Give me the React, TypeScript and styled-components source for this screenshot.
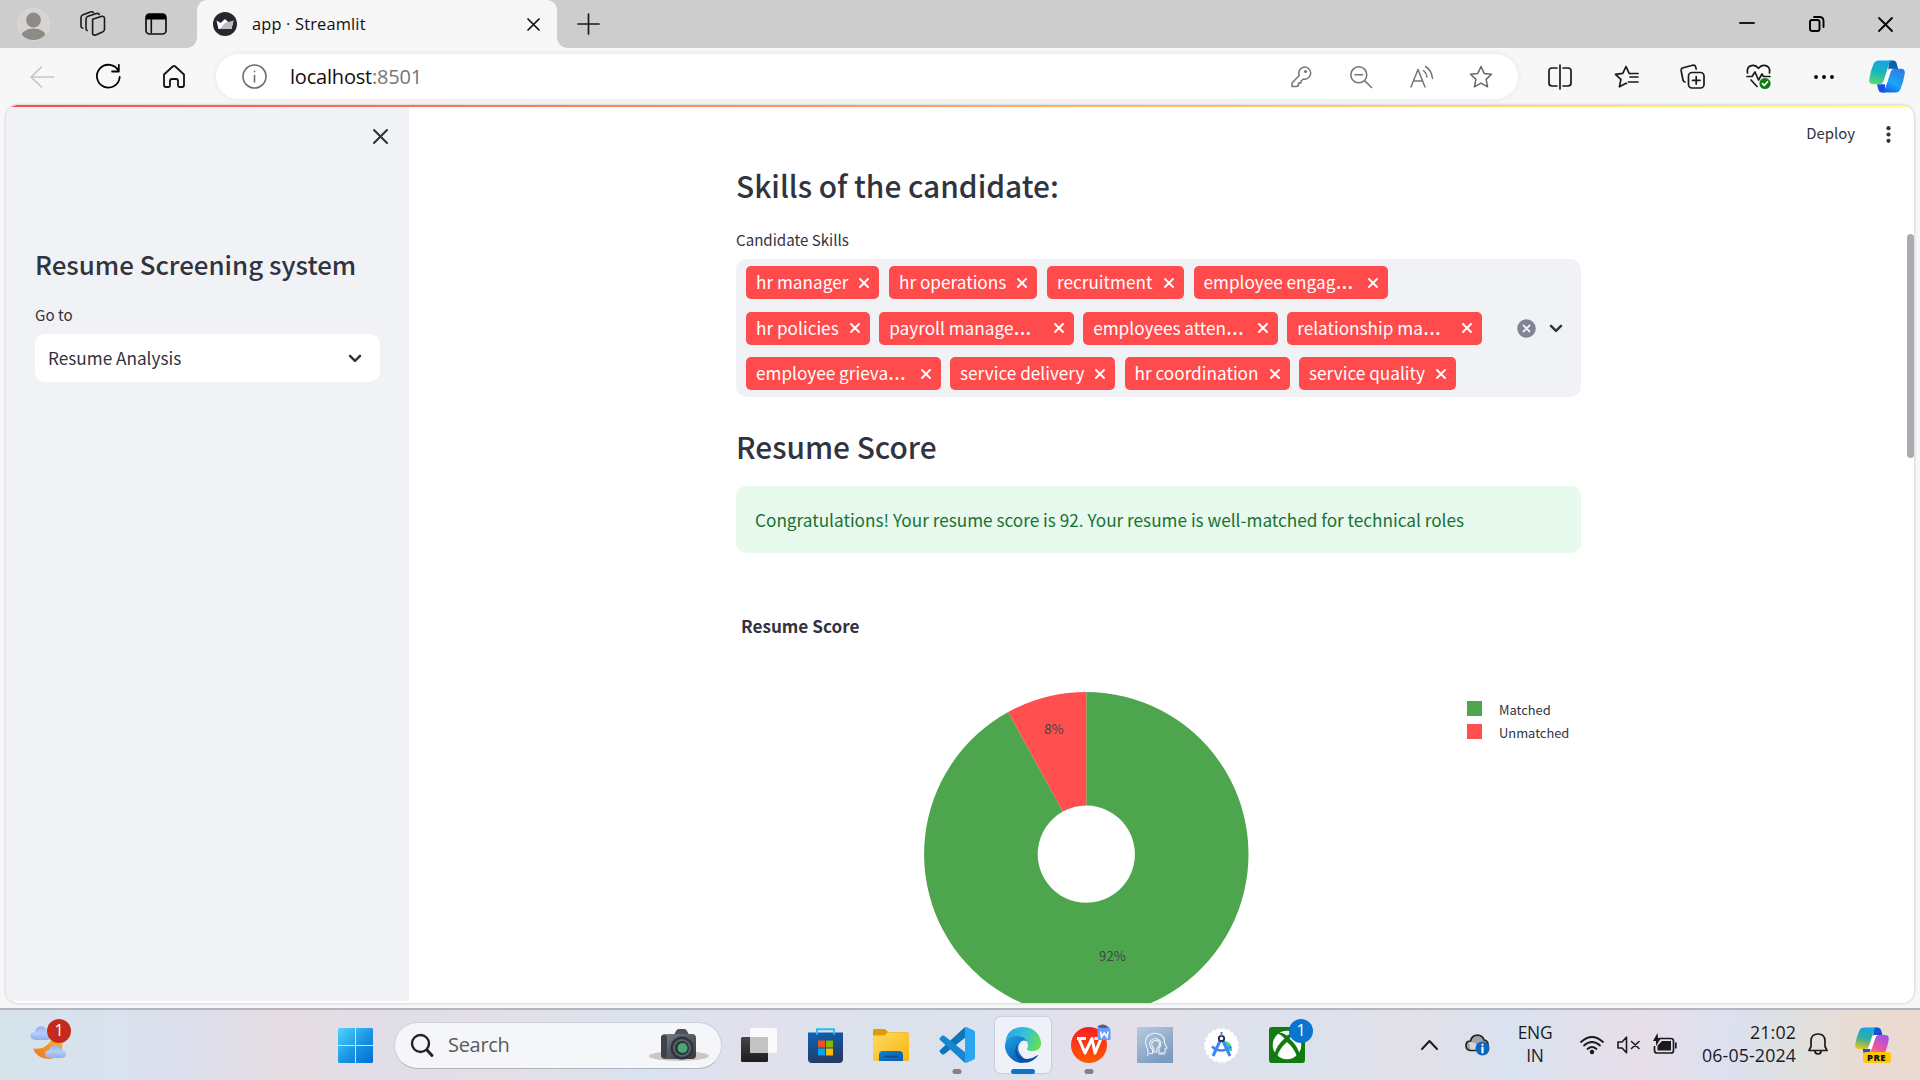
import React from 'react';
import styled, { createGlobalStyle } from 'styled-components';

const SOURCE = '"Noto Sans CJK SC", "Open Sans", sans-serif';
const SEGOE = '"Open Sans", "Noto Sans", sans-serif';

const Global = createGlobalStyle`
  *, *::before, *::after { box-sizing: border-box; }
  html, body { margin: 0; padding: 0; overflow: hidden; background: #f7f7f7; }
  svg { display: block; flex: none; overflow: visible; }
`;

const Screen = styled.div`
  width: 1920px;
  height: 1080px;
  display: flex;
  flex-direction: column;
  overflow: hidden;
  font-family: ${SEGOE};
  background: #f7f7f7;
`;

/* ---------- browser chrome ---------- */
const TabStrip = styled.div`
  height: 48px;
  flex: none;
  display: flex;
  background: #cdcdcd;
`;
const Slot = styled.div<{ $w: number }>`
  width: ${p => p.$w}px;
  flex: none;
  display: flex;
  align-items: center;
  justify-content: center;
`;
const StripLead = styled.div`
  width: 197px;
  flex: none;
  display: flex;
  padding-left: 1px;
`;
const Tab = styled.div`
  position: relative;
  width: 360px;
  height: 48px;
  flex: none;
  display: flex;
  align-items: center;
  padding: 0 16px;
  background: #f7f7f7;
  border-radius: 10px 10px 0 0;
  &::before, &::after {
    content: '';
    position: absolute;
    bottom: 0;
    width: 10px;
    height: 10px;
  }
  &::before { left: -10px; background: radial-gradient(circle at 0 0, #cdcdcd 9.5px, #f7f7f7 10px); }
  &::after { right: -10px; background: radial-gradient(circle at 100% 0, #cdcdcd 9.5px, #f7f7f7 10px); }
`;
const TabTitle = styled.span`
  flex: 1;
  margin-left: 15px;
  font-size: 16.4px;
  letter-spacing: 0.17px;
  line-height: 24px;
  color: #111;
`;
const StripFill = styled.div`flex: 1;`;

const Toolbar = styled.div`
  height: 57px;
  flex: none;
  display: flex;
  align-items: center;
  padding: 0 2px 0 8px;
  background: #f7f7f7;
`;
const Address = styled.div`
  width: 1302px;
  height: 45px;
  flex: none;
  margin: 0 9px 0 9px;
  display: flex;
  align-items: center;
  padding: 0 7px 0 26px;
  border-radius: 23px;
  background: #fff;
  box-shadow: 0 0 6px rgba(0, 0, 0, 0.08);
`;
const Url = styled.div`
  flex: 1;
  margin-left: 23px;
  font-size: 20px;
  line-height: 28px;
  letter-spacing: -0.2px;
  color: #101010;
  span { color: #757575; }
`;

/* ---------- page ---------- */
const Page = styled.div`
  position: relative;
  height: 898px;
  flex: none;
  margin: 0 6px;
  display: flex;
  overflow: hidden;
  border-radius: 12px;
  background: #fff;
  box-shadow: 0 0 3px rgba(0, 0, 0, 0.25);
`;
const Decoration = styled.div`
  position: absolute;
  top: 0;
  left: 0;
  right: 0;
  height: 2px;
  background: linear-gradient(90deg, #ff4b4b, #fffd80);
`;
const Sidebar = styled.aside`
  width: 403px;
  height: 896px;
  flex: none;
  padding: 0 29px;
  background: #f0f2f6;
  display: flex;
  flex-direction: column;
  font-family: ${SOURCE};
  color: #31333f;
`;
const SideClose = styled.div`
  height: 62px;
  display: flex;
  justify-content: flex-end;
  align-items: center;
  margin-right: -8px;
`;
const SideTitle = styled.h1`
  margin: 79px 0 0;
  font-size: 25.9px;
  font-weight: 500;
  line-height: 36px;
  white-space: nowrap;
`;
const Label = styled.div<{ $top: number }>`
  flex: none;
  margin-top: ${p => p.$top}px;
  height: 26px;
  font-size: 15.1px;
  line-height: 26px;
`;
const Select = styled.div`
  height: 48px;
  margin-top: 7px;
  padding: 0 18px 0 13px;
  display: flex;
  align-items: center;
  justify-content: space-between;
  border-radius: 10px;
  background: #fff;
  font-size: 17.2px;
  line-height: 28px;
`;

const Main = styled.main`
  flex: 1;
  display: flex;
  justify-content: space-between;
  font-family: ${SOURCE};
  color: #31333f;
`;
const Column = styled.div`
  width: 845px;
  margin-left: 327px;
  padding-top: 56px;
  display: flex;
  flex-direction: column;
`;
const Heading = styled.h2<{ $top: number }>`
  flex: none;
  margin: ${p => p.$top}px 0 0;
  height: 48px;
  font-size: 29.85px;
  font-weight: 500;
  line-height: 48px;
  white-space: nowrap;
`;
const Multi = styled.div`
  flex: none;
  height: 138px;
  margin-top: 7px;
  padding: 7px 18px 0 10px;
  display: flex;
  justify-content: space-between;
  border-radius: 10px;
  background: #f0f2f6;
`;
const TagRows = styled.div`
  display: flex;
  flex-direction: column;
  gap: 12.5px;
`;
const TagRow = styled.div<{ $gap: number }>`
  display: flex;
  gap: ${p => p.$gap}px;
`;
const Tag = styled.div<{ $w: number }>`
  width: ${p => p.$w}px;
  height: 33px;
  padding: 0 10px;
  display: flex;
  align-items: center;
  justify-content: space-between;
  border-radius: 5px;
  background: #ff4b4b;
  color: #fff;
  font-size: 17.2px;
  white-space: nowrap;
`;
const TagText = styled.span`
  height: 33px;
  line-height: 31px;
`;
const Dots = styled.span`
  font-family: "Open Sans", sans-serif;
  font-size: 23px;
  line-height: 20px;
`;
const MultiTools = styled.div`
  height: 124px;
  display: flex;
  align-items: center;
  gap: 13px;
`;
const Alert = styled.div`
  flex: none;
  height: 67px;
  margin-top: 16px;
  padding: 0 19px;
  display: flex;
  align-items: center;
  border-radius: 10px;
  background: #e8f9ee;
  color: #177233;
  font-size: 17.19px;
  white-space: nowrap;
`;
const ChartTitle = styled.h3`
  flex: none;
  margin: 59px 0 0 5px;
  height: 28px;
  font-size: 17.15px;
  font-weight: 700;
  line-height: 28px;
`;
const ChartBody = styled.div`
  flex: none;
  display: flex;
  margin-top: 52px;
  padding-left: 188px;
`;
const Legend = styled.div`
  margin: 6px 0 0 218px;
  display: flex;
  flex-direction: column;
`;
const LegendRow = styled.div`
  height: 23.3px;
  display: flex;
  align-items: center;
  gap: 17px;
  font-size: 12.9px;
  line-height: 20px;
`;
const Swatch = styled.span<{ $c: string }>`
  width: 15px;
  height: 15px;
  margin-top: -2px;
  background: ${p => p.$c};
`;
const PageTools = styled.div`
  display: flex;
  padding-top: 8px;
  height: 50px;
  align-items: center;
  font-size: 14.9px;
  gap: 31px;
  margin-right: 23px;
`;
const Deploy = styled.span`
  height: 30px;
  line-height: 27px;
`;
const ScrollThumb = styled.div`
  position: absolute;
  right: 0;
  top: 129px;
  width: 7px;
  height: 224px;
  border-radius: 4px;
  background: #acabb1;
`;

/* ---------- taskbar ---------- */
const PageGap = styled.div`height: 5px; flex: none;`;
const Taskbar = styled.footer`
  height: 72px;
  flex: none;
  display: flex;
  align-items: center;
  border-top: 2px solid #b3b4bb;
  background: linear-gradient(90deg, #d5e3eb 0, #d9e2ee 120px, #dddeeb 200px, #e6dde3 285px, #e1dee8 400px, #e4dfe6 500px, #d9e3ef 640px, #e1e0ec 760px, #dbe2ec 880px, #dde2ee 1000px, #e4e0ea 1120px, #dbe2ed 1300px, #e2dfe8 1420px, #d9e2ef 1510px, #e7dee9 1640px, #dce0ef 1730px, #e0e0df 1800px, #e9dbd3 1860px, #ead9d0 1920px);
`;
const Weather = styled.div`
  position: relative;
  width: 322px;
  height: 70px;
  padding: 16px 0 0 29px;
  flex: none;
`;
const Badge = styled.span<{ $x: number; $y: number; $c: string }>`
  position: absolute;
  left: ${p => p.$x}px;
  top: ${p => p.$y}px;
  width: 24px;
  height: 24px;
  border-radius: 50%;
  background: ${p => p.$c};
  color: #fff;
  font-size: 16px;
  line-height: 23px;
  text-align: center;
`;
const SearchBox = styled.div`
  width: 328px;
  height: 47px;
  flex: none;
  margin: 0 4px 0 6px;
  padding: 0 12px 0 16px;
  display: flex;
  align-items: center;
  border: 1.5px solid #cfcfd8;
  border-bottom-color: #b3b5be;
  border-radius: 24px;
  background: #f5f6f9;
  font-size: 20px;
  color: #5a5a5c;
`;
const SearchText = styled.span`
  flex: 1;
  margin-left: 15px;
  letter-spacing: -0.3px;
  line-height: 28px;
`;
const AppButton = styled.div<{ $active?: boolean }>`
  position: relative;
  width: 56px;
  height: 56px;
  margin: 0 5px;
  flex: none;
  display: flex;
  align-items: center;
  justify-content: center;
  border-radius: 6px;
  background: ${p => (p.$active ? '#eef1f7' : 'transparent')};
  box-shadow: ${p => (p.$active ? '0 0 1px 1px rgba(150,155,175,0.28)' : 'none')};
`;
const Running = styled.span<{ $active?: boolean }>`
  position: absolute;
  bottom: -1px;
  left: 50%;
  width: ${p => (p.$active ? 24 : 9)}px;
  height: 5px;
  transform: translateX(-50%);
  border-radius: 3px;
  background: ${p => (p.$active ? '#0a74d1' : '#818388')};
`;
const TrayFill = styled.div`flex: 1;`;
const TrayText = styled.div<{ $align: string; $w: number; $size: number; $ls: number }>`
  width: ${p => p.$w}px;
  flex: none;
  margin-top: -2px;
  text-align: ${p => p.$align};
  font-size: ${p => p.$size}px;
  line-height: 23.5px;
  letter-spacing: ${p => p.$ls}px;
  color: #1b1b1f;
  white-space: nowrap;
`;

/* ---------- small icons ---------- */
type LineProps = { w: number; h: number; c?: string; s?: number; children: React.ReactNode };
const Line = ({ w, h, c = '#1a1a1a', s = 1.7, children }: LineProps) => (
  <svg width={w} height={h} viewBox={`0 0 ${w} ${h}`} fill="none" stroke={c} strokeWidth={s} strokeLinecap="round" strokeLinejoin="round">
    {children}
  </svg>
);
const Cross = ({ size, c, s }: { size: number; c: string; s: number }) => (
  <Line w={size} h={size} c={c} s={s}><path d={`M1 1L${size - 1} ${size - 1}M${size - 1} 1L1 ${size - 1}`} /></Line>
);
const Chevron = () => <Line w={14} h={9} c="#31333f" s={2.5}><path d="M2 1.8l5 5 5-5" /></Line>;

const Avatar = () => (
  <svg width="33" height="33" viewBox="0 0 33 33">
    <clipPath id="av"><circle cx="16.5" cy="16.5" r="15.6" /></clipPath>
    <circle cx="16.5" cy="16.5" r="16" fill="#d6d4d0" stroke="#dddbd7" />
    <g fill="#8e8a86" clipPath="url(#av)"><circle cx="16.5" cy="12" r="7.4" /><ellipse cx="16.5" cy="29" rx="12.5" ry="8.5" /></g>
  </svg>
);
const Workspaces = () => (
  <Line w={26} h={26} s={1.6}>
    <path d="M12.6 8.2l8.500-2.800q3.400-.8 3.400 2.200v10.600q0 2-2 2.800l-6.800 2.900q-3.100 1-3.100-2z" />
    <path d="M7.2 19.500q-1.200-.4-1.200-2V8q0-2 2-2.800L16.500 2.500q2.200-.6 2.800 1" />
    <path d="M2.800 17.200q-1.800-.4-1.800-2V6.500q0-2 2-2.800L10.500 1q2-.6 3 .6" />
  </Line>
);
const TabActions = () => (
  <svg width="22" height="22" viewBox="0 0 22 22"><rect x="1" y="1" width="20" height="20" rx="3.5" fill="none" stroke="#111" strokeWidth="1.7" /><path d="M1 6.500V4q0-3.200 3.200-3.200h13.600Q21 .8 21 4v2.500z" fill="#000" /><path d="M6.300 6v14.500" stroke="#111" strokeWidth="1.6" /></svg>
);
const Favicon = () => (
  <svg width="24" height="24" viewBox="0 0 24 24"><circle cx="12" cy="12" r="12" fill="#262730" /><path d="M3.500 8.500l4.200 2.500L12 7l4.300 4 4.200-2.500L18.500 17h-13z" fill="#fff" /><path d="M12 11l8.500-2.500L18.500 17H7z" fill="#bdbdc0" /></svg>
);
const CopilotMark = ({ w, h, pre }: { w: number; h: number; pre?: boolean }) => {
  const k = pre ? 'p' : 'e';
  return (
    <svg width={w} height={h} viewBox="0 0 36 33" preserveAspectRatio="none">
      <defs>
        <linearGradient id={`l${k}`} x1=".4" y1="0" x2=".2" y2="1"><stop offset="0" stopColor="#12a6e4" /><stop offset=".5" stopColor={pre ? '#35b19b' : '#1cb7b6'} /><stop offset="1" stopColor={pre ? '#f0c419' : '#5ade6c'} /></linearGradient>
        <linearGradient id={`r${k}`} x1=".8" y1="0" x2=".3" y2="1"><stop offset="0" stopColor={pre ? '#a14fe8' : '#2f7be4'} /><stop offset=".6" stopColor={pre ? '#e8569f' : '#1aa6f5'} /><stop offset="1" stopColor={pre ? '#ff8a55' : '#1467e8'} /></linearGradient>
      </defs>
      <path d="M20 .5h4q2.800 0 3.600 2.800L29.200 9h-5q-2.600 0-3.600 3l-2 6z" fill={pre ? '#1a4fd0' : '#0a5fa8'} />
      <path d="M16 32.500h-3.500q-2.300 0-3-2.500L8 24.200h4.500q2.600 0 3.500-3z" fill="#1a4fe0" />
      <path d="M9.500.5H23q-2 .5-3 3.500l-5.500 17q-1 3.200-4 3.200H4q-4.500 0-3.700-5.200Q1.500 11 4.500 4 6 .5 9.500.5z" fill={`url(#l${k})`} />
      <path d="M26.500 32.500H13q2-.5 3-3.500l5.500-17q1-3.200 4-3.200H32q4.500 0 3.700 5.200Q34.500 22 31.500 29q-1.500 3.500-5 3.500z" fill={`url(#r${k})`} />
      <path d="M20 8.800h5.500q-3 0-4 3.200l-4 12.200H12.500q2-.5 3-3.500l2.500-8q1-3 2-3.900z" fill="#fff" />
    </svg>
  );
};

const Pie = () => {
  const a = 0.08 * 2 * Math.PI;
  const R = 162.2, r = 48.6, cx = 162.3, cy = 162.2;
  const x = (q: number) => cx - Math.sin(a) * q;
  const y = (q: number) => cy - Math.cos(a) * q;
  return (
    <svg width="325" height="325" viewBox="0 0 325 325" fontFamily={SOURCE} fontSize="13.2" fill="#444">
      <path fill="#4da64d" d={`M${cx} ${cy - R}A${R} ${R} 0 1 1 ${x(R)} ${y(R)}L${x(r)} ${y(r)}A${r} ${r} 0 1 0 ${cx} ${cy - r}z`} />
      <path fill="#ff4f4f" d={`M${cx} ${cy - R}A${R} ${R} 0 0 0 ${x(R)} ${y(R)}L${x(r)} ${y(r)}A${r} ${r} 0 0 1 ${cx} ${cy - r}z`} />
      <text x="130" y="42" textAnchor="middle">8%</text>
      <text x="188.5" y="269" textAnchor="middle">92%</text>
    </svg>
  );
};

/* ---------- taskbar icons ---------- */
const WeatherIcon = () => (
  <svg width="38" height="36" viewBox="0 0 38 36">
    <defs>
      <linearGradient id="cl" x1="0" y1="0" x2="0" y2="1"><stop offset="0" stopColor="#8fb2ee" /><stop offset=".5" stopColor="#b5cdf8" /><stop offset="1" stopColor="#8db0ef" /></linearGradient>
      <linearGradient id="mo" x1="1" y1="0" x2="0" y2="1"><stop offset="0" stopColor="#f6b72b" /><stop offset="1" stopColor="#ec7424" /></linearGradient>
    </defs>
    <path d="M33 11.500Q36 32 20 33 8 33 4 22.500q8 1.500 14-3.500 5-4 6-9z" fill="url(#mo)" />
    <path d="M6 14q-5-1-4.800-4.500Q1.500 6 5.500 6 7 .5 12 .3 16.500.5 18 5q4 0 4 4.500T18 14z" fill="url(#cl)" />
    <path d="M20 32q-4-.5-4-4t4-4q1.500-5 6.500-5 4.500.5 5.500 5 5 .5 5 4t-4 4z" fill="url(#cl)" />
  </svg>
);
const StartIcon = () => (
  <svg width="35" height="35" viewBox="0 0 35 35">
    <defs><linearGradient id="st" gradientUnits="userSpaceOnUse" x1="0" y1="0" x2="35" y2="35"><stop offset="0" stopColor="#4fd5ff" /><stop offset=".55" stopColor="#1b93e2" /><stop offset="1" stopColor="#026fd0" /></linearGradient></defs>
    <path fill="url(#st)" d="M1.500 0H17v17H0V1.500Q0 0 1.500 0zM18 0h15.500Q35 0 35 1.500V17H18zM0 18h17v17H1.500Q0 35 0 33.500zM18 18h17v15.500q0 1.500-1.500 1.500H18z" />
  </svg>
);
const CameraIcon = () => (
  <svg width="60" height="34" viewBox="0 0 60 34">
    <defs><linearGradient id="ca" x1="0" y1="0" x2="1" y2="1"><stop offset="0" stopColor="#7b828b" /><stop offset=".5" stopColor="#545a63" /><stop offset="1" stopColor="#343941" /></linearGradient></defs>
    <ellipse cx="30" cy="28" rx="30" ry="5" fill="#cfc6c3" />
    <path d="M25 7q2-5 4-6h7q2 1 4 6z" fill="#4d535c" />
    <rect x="12" y="6" width="35" height="25" rx="4" fill="url(#ca)" /><rect x="12" y="7" width="6" height="23" rx="3" fill="#3d434b" />
    <circle cx="33" cy="20" r="11.5" fill="#30353b" /><circle cx="33" cy="20" r="9" fill="#5c636b" /><circle cx="33" cy="20" r="7" fill="#1f3a33" /><circle cx="33.5" cy="20" r="5" fill="#4fa578" />
  </svg>
);
const TaskView = () => (
  <svg width="36" height="36" viewBox="0 0 36 36">
    <defs><linearGradient id="tv" x1="0" y1="0" x2="0" y2="1"><stop offset="0" stopColor="#454545" /><stop offset="1" stopColor="#1d1d1d" /></linearGradient></defs>
    <rect x="0" y="10" width="27" height="25" rx="1.5" fill="url(#tv)" /><rect x="9" y="1" width="27" height="25" rx="1.5" fill="#fcfcfc" opacity=".92" /><path d="M9 10h18v16H9z" fill="#c3c3c4" />
  </svg>
);
const StoreIcon = () => (
  <svg width="35" height="35" viewBox="0 0 35 35">
    <defs><linearGradient id="ms" x1="0" y1="0" x2=".3" y2="1"><stop offset="0" stopColor="#0c63b5" /><stop offset="1" stopColor="#253b66" /></linearGradient></defs>
    <path d="M0 4.500h35V31q0 4-4 4H4q-4 0-4-4z" fill="url(#ms)" /><path d="M9 6.500V1.200h17v5.300" fill="none" stroke="#29bdf3" strokeWidth="2" />
    <path fill="#f25022" d="M10 12.500h7v7h-7z" /><path fill="#7fba00" d="M18 12.500h7v7h-7z" /><path fill="#00a4ef" d="M10 20.500h7v7h-7z" /><path fill="#ffb900" d="M18 20.500h7v7h-7z" />
  </svg>
);
const FolderIcon = () => (
  <svg width="36" height="33" viewBox="0 0 36 33">
    <defs><linearGradient id="fo" x1="0" y1="0" x2="1" y2="1"><stop offset="0" stopColor="#ffd964" /><stop offset="1" stopColor="#f8b60c" /></linearGradient><linearGradient id="fb" x1="0" y1="0" x2="1" y2="1"><stop offset="0" stopColor="#117fd6" /><stop offset="1" stopColor="#0b5ba9" /></linearGradient></defs>
    <path d="M0 1.500Q0 0 1.500 0H11q1.500 0 2.300 1L15 3.200h20V12H0z" fill="#dd9b0a" />
    <path d="M0 6.500h10q2 0 3-1.500l1-1.500h20.500Q36 3.500 36 5v25.500q0 1.500-1.500 1.500h-33Q0 32 0 30.500z" fill="url(#fo)" />
    <path d="M6 32V26q0-4 4-4h16q4 0 4 4v6z" fill="url(#fb)" /><path d="M11.500 27.500h13" stroke="#0b4a8c" strokeWidth="1.6" strokeLinecap="round" />
  </svg>
);
const CodeIcon = () => (
  <svg width="36" height="36" viewBox="0 0 36 36">
    <path d="M26 0L1 23q-1.200 1.200 0 2.300l2 1.900q1 .8 2.200 0L27 10z" fill="#0b76bd" />
    <path d="M26 36L1 13q-1.200-1.200 0-2.300l2-1.900q1-.8 2.200 0L27 26z" fill="#1487cf" />
    <path d="M26 .5q.7-.8 1.800-.2L35 3.600q1 .6 1 1.800v25.200q0 1.200-1 1.800l-7.200 3.400q-1.300.4-1.800-.3z" fill="#2ba4f2" />
  </svg>
);
const EdgeIcon = () => (
  <svg width="36" height="36" viewBox="0 0 36 36">
    <defs>
      <linearGradient id="ea" x1="0" y1=".3" x2="1" y2=".6"><stop offset="0" stopColor="#2aa5e3" /><stop offset=".5" stopColor="#35c1df" /><stop offset="1" stopColor="#66e148" /></linearGradient>
      <linearGradient id="eb" x1="0" y1="0" x2=".6" y2="1"><stop offset="0" stopColor="#1fa1e2" /><stop offset="1" stopColor="#0b5fc0" /></linearGradient>
    </defs>
    <path d="M.2 16Q2 .2 18 0q10 .2 15.500 8 4 7 2 11.500-2.500 4.500-8.500 4.500-5.500 0-5-2.500 2-2.500.5-6Q19.500 9.500 12 9 4 9 .2 16z" fill="url(#ea)" />
    <path d="M.2 16.500Q3 8.500 12 8.800q7 .4 10 5.600-5-2.400-7.500 2Q11 23 17 29.500q3 3.500 6 5.600Q12 38 5 30.500-1 24 .2 16.500z" fill="url(#eb)" />
    <path d="M12.500 17q-3.500 11 6.500 14.500 6.500 1.500 13-3 1.500-1 1.200 0Q29 34 22.500 35.400 15 36 11.500 30 8.500 22.500 12.500 17z" fill="#0f4f9f" />
  </svg>
);
const WpsIcon = () => (
  <svg width="36" height="36" viewBox="0 0 36 36">
    <defs><linearGradient id="wp" x1="0" y1="0" x2="0" y2="1"><stop offset="0" stopColor="#fb1c22" /><stop offset="1" stopColor="#ff5a05" /></linearGradient></defs>
    <circle cx="18" cy="18" r="18" fill="url(#wp)" />
    <path d="M6 11.500h9M8 12l6 14 7-14.500 3 14.500 6-14.500h-6.500" fill="none" stroke="#fff" strokeWidth="3" strokeLinejoin="round" />
    <path d="M26.500-1Q33-4 38 0l1.500 3v10H28q-1.500 0-1.500-1.500z" fill="#6a9bf6" /><path d="M27-.8Q33-5 37.500 1H29z" fill="#56607e" /><path d="M29.500 4.500l1 5.500 2.700-4 2.800 4 1-5.500" fill="none" stroke="#fff" strokeWidth="1.6" />
  </svg>
);
const HeadIcon = () => (
  <svg width="36" height="36" viewBox="0 0 36 36">
    <defs><linearGradient id="hd" x1="0" y1="0" x2=".6" y2="1"><stop offset="0" stopColor="#b6cbdd" /><stop offset="1" stopColor="#7b9bc0" /></linearGradient></defs>
    <path d="M0 0h36v36H0z" fill="url(#hd)" />
    <g fill="none" stroke="#edf4fb" strokeWidth="1.1"><path d="M10.500 29q1.500-4.500-1-9.500Q7 13 11 9q5-4.500 12-1.500 5 2.500 4.500 8.500l2.500 5-2 1q1 5-2 5h-4.500" /><path d="M12 26.500h3.500v-4q-4.500-4-2-8.500 3.500-4 8-1.500 4.500 3.500.5 9v4.500h5" /><path d="M15 25h5v-3.500q4-4 1.500-7-3.500-2.500-6 .5-2 3.500 1.500 6.500v3" /></g>
  </svg>
);
const StudioIcon = () => (
  <svg width="35" height="35" viewBox="0 0 35 35">
    <circle cx="17.5" cy="17.5" r="16.3" fill="#fff" stroke="#fff" strokeWidth="2" strokeDasharray="3.5 1.6" />
    <path d="M19 13q7-1 9 7v3h-6z" fill="#3ddc84" />
    <g fill="none" stroke="#4285f4" strokeWidth="3"><path d="M16.500 12L9 28M18.500 12L26 28" /><path d="M8 18.500q9 8 19 0" strokeWidth="2.6" /></g>
    <circle cx="17.5" cy="10.5" r="2.7" fill="#fff" stroke="#1e2b38" strokeWidth="1.8" /><path d="M17.500 4v4" stroke="#4285f4" strokeWidth="2" />
  </svg>
);
const XboxIcon = () => (
  <svg width="36" height="36" viewBox="0 0 36 36">
    <rect width="36" height="36" rx="3" fill="#107c10" /><circle cx="18" cy="18" r="14.3" fill="#fff" />
    <path d="M9 5.500Q13 5 18 8.500q5-3.500 9-3l1 1Q24.500 7 20.500 11.500q8 7 10 15.500l-2.500 3Q26 22 18 15 10 22 8 30l-2.500-3q2-8.500 10-15.500Q11.500 7 8 6.500z" fill="#107c10" />
  </svg>
);

const PreWrap = styled.div`
  position: relative;
  height: 36px;
`;
const PreTag = styled.span`
  position: absolute;
  left: 8px;
  top: 25px;
  width: 28px;
  height: 11px;
  border-radius: 3px;
  background: #ffc60a;
  color: #111;
  font-size: 9.5px;
  font-weight: 800;
  line-height: 11px;
  text-align: center;
  letter-spacing: 0.4px;
`;
const PreMark = () => <PreWrap><CopilotMark w={34} h={30} pre /><PreTag>PRE</PreTag></PreWrap>;

type TagData = [text: string, width: number, truncated?: boolean];
const tagRows: { gap: number; tags: TagData[] }[] = [
  { gap: 10, tags: [['hr manager', 133], ['hr operations', 148], ['recruitment', 136.5], ['employee engag', 194, true]] },
  { gap: 9.2, tags: [['hr policies', 124], ['payroll manage', 194.8, true], ['employees atten', 194.8, true], ['relationship ma', 194.8, true]] },
  { gap: 9.5, tags: [['employee grieva', 194.5, true], ['service delivery', 165], ['hr coordination', 165], ['service quality', 157]] },
];

const starPath = 'M12 1.500l3.200 6.900 7.300.9-5.400 5.100 1.500 7.400L12 18.200l-6.600 3.600 1.500-7.400L1.500 9.300l7.300-.9z';

export default function App() {
  return (
    <Screen>
      <Global />
      <TabStrip>
        <StripLead>
          <Slot $w={64}><Avatar /></Slot>
          <Slot $w={56}><Workspaces /></Slot>
          <Slot $w={70}><TabActions /></Slot>
        </StripLead>
        <Tab>
          <Favicon />
          <TabTitle>app · Streamlit</TabTitle>
          <Slot $w={16}><Cross size={13} c="#111" s={1.7} /></Slot>
        </Tab>
        <Slot $w={63}><Line w={21} h={21}><path d="M10.500 0v20M0 10h21" /></Line></Slot>
        <StripFill />
        <Slot $w={69}><Line w={15} h={4} s={2}><path d="M0 1h14" /></Line></Slot>
        <Slot $w={69}>
          <Line w={15} h={16} s={1.9} c="#000"><rect x="1" y="4" width="9.5" height="11" rx="2" /><path d="M5 1h5.500q4 0 4 4v6" /></Line>
        </Slot>
        <Slot $w={69}><Cross size={15} c="#000" s={1.8} /></Slot>
      </TabStrip>

      <Toolbar>
        <Slot $w={67}><Line w={24} h={22} c="#c6c6c6"><path d="M11.500 1L1 11l10.500 10M1 11h22.500" /></Line></Slot>
        <Slot $w={66}><Line w={25} h={25} s={1.8} c="#000"><path d="M22.500 7A11.400 11.400 0 1 0 23.700 13M22.800 .8v6.700h-6.700" /></Line></Slot>
        <Slot $w={66}><Line w={22} h={23} s={1.8} c="#111"><path d="M1 9.500L9.700 1.500q1.300-1 2.600 0L21 9.500V20q0 2-2 2h-2.500q-1.500 0-1.500-1.500V16q0-2-2-2H9q-2 0-2 2v4.500Q7 22 5.500 22H3q-2 0-2-2z" /></Line></Slot>
        <Address>
          <Line w={25} h={25} c="#6c6c6c" s={1.6}><circle cx="12.5" cy="12.5" r="11.5" /><path d="M12.500 11.500v6.500M12.500 7.300v.3" /></Line>
          <Url>localhost<span>:8501</span></Url>
          <Slot $w={60}>
            <Line w={20} h={21} c="#757575" s={1.5}><path d="M8.200 9.500A6 6 0 1 1 12.500 13L10 15v2H7.500v2.500L5.500 20.500H1V17z" /><circle cx="14.5" cy="5.5" r=".8" /></Line>
          </Slot>
          <Slot $w={60}><Line w={22} h={22} c="#757575" s={1.6}><circle cx="8.8" cy="8.8" r="8" /><path d="M5 8.800h7.600M14.700 14.700L21.500 21.500" /></Line></Slot>
          <Slot $w={60}><Line w={23} h={22} c="#757575" s={1.5}><path d="M1 21L8 3.500 15 21M3.500 15h9M13.500 4.500q3 2.500 3.500 6.500M15.500 .5q6 3.500 7 12" /></Line></Slot>
          <Slot $w={60}><Line w={24} h={24} c="#666" s={1.5}><path d={starPath} /></Line></Slot>
        </Address>
        <Slot $w={66}><Line w={24} h={24}><path d="M9 3H4Q1 3 1 6v12q0 3 3 3h5M15 3h5q3 0 3 3v12q0 3-3 3h-5M12 0v24" /></Line></Slot>
        <Slot $w={66}><Line w={25} h={24}><path d="M12.500 18.500l-.5-.3-6.600 3.600 1.500-7.400L1.500 9.300l7.300-.9L12 1.500l3.200 6.900 1 .2M16 12h8M14.500 17H24M17 8.500h7" /></Line></Slot>
        <Slot $w={66}><Line w={25} h={25}><rect x="8.5" y="8.5" width="15.5" height="15.5" rx="3.5" /><path d="M16.200 12.500v7.600M12.500 16.300H20M5 18q-1.600 0-2-2L1.200 7q-.4-2.500 2-3.200l9.300-2.500q2.500-.6 3.200 1.700l.5 2" /></Line></Slot>
        <Slot $w={66}>
          <svg width="25" height="25" viewBox="0 0 25 25" fill="none" stroke="#1a1a1a" strokeWidth="1.7" strokeLinecap="round" strokeLinejoin="round">
            <path d="M1.500 9Q.5 2 6.500 1.300q3.500-.3 6 3 2.500-3.300 6-3 6 .7 5 7.700M1 12.500h5L9 8l3.500 8L16 10l1.500 2.500H24M5 16l6 6.500" />
            <circle cx="19" cy="19.5" r="5.6" fill="#107c10" stroke="none" /><path d="M16.500 19.700l1.800 1.800 3.200-3.800" stroke="#fff" />
          </svg>
        </Slot>
        <Slot $w={66}><svg width="22" height="6" viewBox="0 0 22 6"><circle cx="3" cy="3" r="1.9" /><circle cx="11" cy="3" r="1.9" /><circle cx="19" cy="3" r="1.9" /></svg></Slot>
        <Slot $w={60}><CopilotMark w={36} h={33} /></Slot>
      </Toolbar>

      <Page>
        <Sidebar>
          <SideClose><Cross size={15} c="#31333f" s={2.1} /></SideClose>
          <SideTitle>Resume Screening system</SideTitle>
          <Label $top={19}>Go to</Label>
          <Select>Resume Analysis<Chevron /></Select>
        </Sidebar>
        <Main>
          <Column>
            <Heading $top={0}>Skills of the candidate:</Heading>
            <Label $top={17}>Candidate Skills</Label>
            <Multi>
              <TagRows>
                {tagRows.map(row => (
                  <TagRow key={row.tags[0][0]} $gap={row.gap}>
                    {row.tags.map(([text, w, cut]) => (
                      <Tag key={text} $w={w}>
                        <TagText>{text}{cut && <Dots>…</Dots>}</TagText>
                        <Cross size={10} c="#fff" s={1.9} />
                      </Tag>
                    ))}
                  </TagRow>
                ))}
              </TagRows>
              <MultiTools>
                <svg width="19" height="19" viewBox="0 0 19 19"><circle cx="9.5" cy="9.5" r="9.3" fill="#808495" /><path d="M6.500 6.500l6 6M12.500 6.500l-6 6" stroke="#f0f2f6" strokeWidth="1.8" strokeLinecap="round" /></svg>
                <Chevron />
              </MultiTools>
            </Multi>
            <Heading $top={25}>Resume Score</Heading>
            <Alert>Congratulations! Your resume score is 92. Your resume is well-matched for technical roles</Alert>
            <ChartTitle>Resume Score</ChartTitle>
            <ChartBody>
              <Pie />
              <Legend>
                <LegendRow><Swatch $c="#4da64d" />Matched</LegendRow>
                <LegendRow><Swatch $c="#ff4f4f" />Unmatched</LegendRow>
              </Legend>
            </ChartBody>
          </Column>
          <PageTools>
            <Deploy>Deploy</Deploy>
            <svg width="5" height="17" viewBox="0 0 5 17" fill="#31333f"><circle cx="2.5" cy="2.2" r="2.1" /><circle cx="2.5" cy="8.5" r="2.1" /><circle cx="2.5" cy="14.8" r="2.1" /></svg>
          </PageTools>
        </Main>
        <Decoration />
        <ScrollThumb />
      </Page>
      <PageGap />

      <Taskbar>
        <Weather><WeatherIcon /><Badge $x={47} $y={9} $c="#c42b1c">1</Badge></Weather>
        <Slot $w={66}><StartIcon /></Slot>
        <SearchBox>
          <Line w={22} h={23} c="#222" s={2.4}><circle cx="9.5" cy="9.5" r="8.5" /><path d="M16 16l5 5.500" strokeWidth="3" /></Line>
          <SearchText>Search</SearchText>
          <CameraIcon />
        </SearchBox>
        <AppButton><TaskView /></AppButton>
        <AppButton><StoreIcon /></AppButton>
        <AppButton><FolderIcon /></AppButton>
        <AppButton><CodeIcon /><Running /></AppButton>
        <AppButton $active><EdgeIcon /><Running $active /></AppButton>
        <AppButton><WpsIcon /><Running /></AppButton>
        <AppButton><HeadIcon /></AppButton>
        <AppButton><StudioIcon /></AppButton>
        <AppButton><XboxIcon /><Badge $x={30} $y={2} $c="#0a74d1">1</Badge></AppButton>
        <TrayFill />
        <Slot $w={54}><Line w={17} h={10} s={2}><path d="M1 9l7.500-8L16 9" /></Line></Slot>
        <Slot $w={42}>
          <svg width="25" height="22" viewBox="0 0 25 22">
            <path d="M5.500 16.500Q1 16 1 11.500T5.500 7Q7 1.200 12.500 1.200 17.500 1.300 19 6q4 .5 4 4.500v6z" fill="#a3a3a3" stroke="#222" strokeWidth="1.7" /><path d="M5.500 15.600L4 8.500Q12 7 14 15.600z" fill="#d5d5d8" />
            <circle cx="17.5" cy="14.5" r="7" fill="#0b66bd" /><path d="M17.500 13.500v5M17.500 10.500v.2" stroke="#fff" strokeWidth="2.2" strokeLinecap="round" />
          </svg>
        </Slot>
        <TrayText $align="center" $w={74} $size={17.4} $ls={-0.3}>ENG<br />IN</TrayText>
        <Slot $w={40}><Line w={24} h={18} s={1.8}><path d="M1 6q11-10 22 0M4 9.500q8-7 16 0M7.500 13q4.500-4 9 0" /><circle cx="12" cy="16" r="1.3" fill="#1a1a1a" /></Line></Slot>
        <Slot $w={32}><Line w={23} h={18} s={1.6}><path d="M1 6h4l4.500-4.800v15.600L5 12H1zM14.500 5.500l7.500 7M22 5.500l-7.500 7" /></Line></Slot>
        <Slot $w={42}>
          <svg width="24" height="20" viewBox="0 0 24 20"><path d="M6.500 3.500H18q2.500 0 2.500 2.500v9.500q0 2.500-2.500 2.500H4q-2.500 0-2.500-2.500V11" fill="none" stroke="#1a1a1a" strokeWidth="1.7" /><path d="M4.500 10.500L9 6h9v9.500H4.500zM22 7.500h1.700v6H22zM4.500-2L0 6h3v5l5-8H5z" fill="#1a1a1a" /></svg>
        </Slot>
        <TrayText $align="right" $w={110} $size={17.8} $ls={0.12}>21:02<br />06-05-2024</TrayText>
        <Slot $w={44}><Line w={20} h={24} s={1.7}><path d="M1 17.500l2-4V8q0-7 7-7t7 7v5.500l2 4zM7 18q0 3 3 3t3-3" /></Line></Slot>
        <Slot $w={63}><PreMark /></Slot>
        <Slot $w={17} />
      </Taskbar>
    </Screen>
  );
}
